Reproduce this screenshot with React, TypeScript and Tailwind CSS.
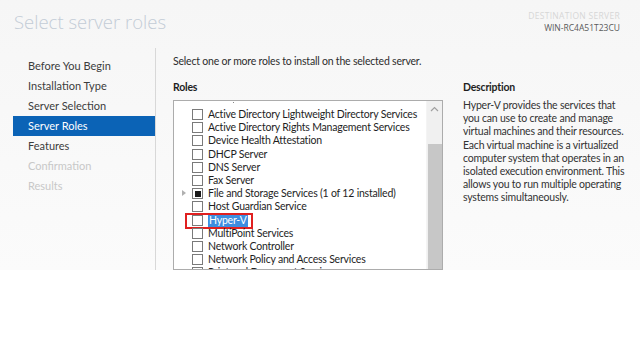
import React from 'react';

const steps = [
    { label: 'Before You Begin', state: 'done' },
    { label: 'Installation Type', state: 'done' },
    { label: 'Server Selection', state: 'done' },
    { label: 'Server Roles', state: 'active' },
    { label: 'Features', state: 'done' },
    { label: 'Confirmation', state: 'off' },
    { label: 'Results', state: 'off' },
];

const roles = [
    { name: 'Active Directory Lightweight Directory Services' },
    { name: 'Active Directory Rights Management Services' },
    { name: 'Device Health Attestation' },
    { name: 'DHCP Server' },
    { name: 'DNS Server' },
    { name: 'Fax Server' },
    { name: 'File and Storage Services (1 of 12 installed)', partial: true, expandable: true },
    { name: 'Host Guardian Service' },
    { name: 'Hyper-V', selected: true },
    { name: 'MultiPoint Services' },
    { name: 'Network Controller' },
    { name: 'Network Policy and Access Services' },
    { name: 'Print and Document Services' },
];

const description = [
    'Hyper-V provides the services that',
    'you can use to create and manage',
    'virtual machines and their resources.',
    'Each virtual machine is a virtualized',
    'computer system that operates in an',
    'isolated execution environment. This',
    'allows you to run multiple operating',
    'systems simultaneously.',
];

function Checkbox({ partial }: { partial?: boolean }) {
    return (
        <span className="w-[11px] h-[11px] border border-[#7a7a7a] bg-white flex items-center justify-center shrink-0">
            {partial && <span className="w-[6px] h-[6px] bg-[#1a1a1a]" />}
        </span>
    );
}

export default function App() {
    return (
        <div className="w-[640px] h-[360px] bg-white overflow-hidden" style={{ fontFamily: 'Lato, "Open Sans", sans-serif' }}>
            <div className="h-[270px] overflow-hidden bg-gradient-to-b from-[#f6f6f6] to-[#fbfbfb] flex flex-col">
                {/* header */}
                <div className="flex justify-between px-[14px] pt-[9px] h-[48px] shrink-0">
                    <div className="text-[18.5px] font-light text-[#c3ccd6] leading-[26px]" style={{ fontFamily: '"Open Sans", sans-serif' }}>Select server roles</div>
                    <div className="flex flex-col items-end pr-[6px] pt-[1px] text-[8.5px] leading-[12px]" style={{ fontFamily: '"Open Sans", sans-serif' }}>
                        <span className="text-[#d6d6d6] tracking-[0.3px]">DESTINATION SERVER</span>
                        <span className="text-[#5a5a5a]">WIN-RC4A51T23CU</span>
                    </div>
                </div>

                <div className="flex flex-1 min-h-0">
                    {/* nav */}
                    <div className="w-[143px] ml-[13px] pt-[8px] border-r border-[#d8d8d8] shrink-0">
                        {steps.map(s => (
                            <div
                                key={s.label}
                                className={
                                    'h-[20px] pl-[15px] text-[11px] leading-[20px] ' +
                                    (s.state === 'active'
                                        ? 'bg-[#0b63b6] text-white'
                                        : s.state === 'off'
                                            ? 'text-[#c8c8c8]'
                                            : 'text-[#3c3c3c]')
                                }
                            >
                                {s.label}
                            </div>
                        ))}
                    </div>

                    {/* main */}
                    <div className="flex flex-1 min-w-0 pl-[17px] pt-[6px] tracking-[-0.2px]">
                        <div className="w-[270px] shrink-0 flex flex-col">
                            <div className="text-[10.5px] leading-[14px] text-[#2d2d2d] whitespace-nowrap">Select one or more roles to install on the selected server.</div>
                            <div className="text-[10.5px] leading-[14px] text-[#1e1e1e] font-bold mt-[12px]">Roles</div>
                            <div className="mt-[6px] w-[270px] flex-1 border border-[#acacac] bg-white flex overflow-hidden">
                                <div className="flex-1 pt-[7px] relative">
                                    <div className="absolute left-[59px] top-[1px] w-[1px] h-[1px] bg-[#888]" />
                                    {roles.map(r => (
                                        <div key={r.name} className="h-[13.2px] flex items-center relative pl-[18px]">
                                            {r.expandable && (
                                                <span className="absolute left-[8px] top-[3px] w-0 h-0 border-y-[3.5px] border-y-transparent border-l-[4px] border-l-[#b0b0b0]" />
                                            )}
                                            <Checkbox partial={r.partial} />
                                            <span
                                                className={
                                                    'ml-[5px] text-[10.5px] leading-[13px] whitespace-nowrap ' +
                                                    (r.selected ? 'bg-[#3d8ee0] text-white px-[1px]' : 'text-[#1e1e1e]')
                                                }
                                            >
                                                {r.name}
                                            </span>
                                            {r.selected && (
                                                <span className="absolute left-[11px] top-[-1px] w-[68px] h-[16px] border-2 border-[#e02020]" />
                                            )}
                                        </div>
                                    ))}
                                </div>
                                {/* scrollbar */}
                                <div className="w-[16px] bg-[#f0f0f0] flex flex-col items-center border-l border-[#f4f4f4]">
                                    <svg width="9" height="6" viewBox="0 0 9 6" className="mt-[5px]">
                                        <path d="M1 5 L4.5 1.5 L8 5" fill="none" stroke="#a0a0a0" strokeWidth="1.2" />
                                    </svg>
                                    <div className="w-[14px] mt-[32px] flex-1 bg-[#c7c7c7]" />
                                </div>
                            </div>
                        </div>

                        {/* description */}
                        <div className="ml-[20px] pt-[26px]">
                            <div className="text-[10.5px] leading-[14px] text-[#1e1e1e] font-bold">Description</div>
                            <div className="mt-[5px] text-[10.5px] leading-[13.2px] text-[#333]">
                                {description.map(l => (
                                    <div key={l} className="whitespace-nowrap">{l}</div>
                                ))}
                            </div>
                        </div>
                    </div>
                </div>
            </div>
        </div>
    );
}
